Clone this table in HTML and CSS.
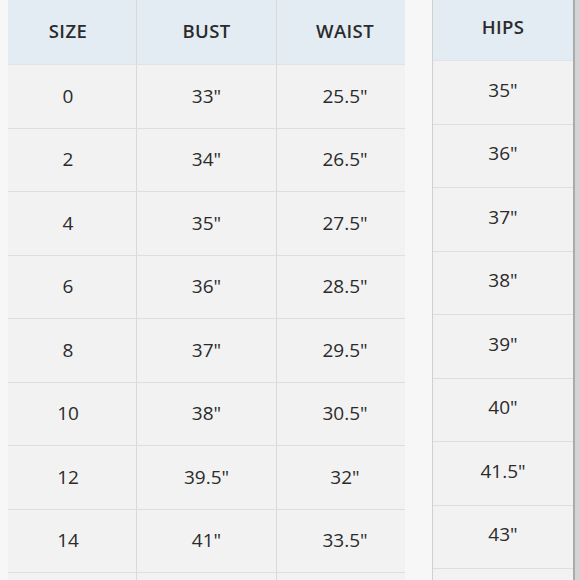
FILE: index.html
```html
<!DOCTYPE html>
<html>
<head>
<meta charset="utf-8">
<link rel="stylesheet" href="styles.css">
</head>
<body>
<div class="page">
  <div class="chart">
    <div class="row head">
      <div class="cell">SIZE</div>
      <div class="cell">BUST</div>
      <div class="cell">WAIST</div>
    </div>
    <div class="row"><div class="cell">0</div><div class="cell">33"</div><div class="cell">25.5"</div></div>
    <div class="row"><div class="cell">2</div><div class="cell">34"</div><div class="cell">26.5"</div></div>
    <div class="row"><div class="cell">4</div><div class="cell">35"</div><div class="cell">27.5"</div></div>
    <div class="row"><div class="cell">6</div><div class="cell">36"</div><div class="cell">28.5"</div></div>
    <div class="row"><div class="cell">8</div><div class="cell">37"</div><div class="cell">29.5"</div></div>
    <div class="row"><div class="cell">10</div><div class="cell">38"</div><div class="cell">30.5"</div></div>
    <div class="row"><div class="cell">12</div><div class="cell">39.5"</div><div class="cell">32"</div></div>
    <div class="row"><div class="cell">14</div><div class="cell">41"</div><div class="cell">33.5"</div></div>
    <div class="row"><div class="cell"></div><div class="cell"></div><div class="cell"></div></div>
  </div>
  <div class="hips">
    <div class="hrow hhead">HIPS</div>
    <div class="hrow">35"</div>
    <div class="hrow">36"</div>
    <div class="hrow">37"</div>
    <div class="hrow">38"</div>
    <div class="hrow">39"</div>
    <div class="hrow">40"</div>
    <div class="hrow">41.5"</div>
    <div class="hrow">43"</div>
    <div class="hrow"></div>
  </div>
  <div class="edge"></div>
</div>
</body>
</html>
```
FILE: styles.css
```css
html, body {
  margin: 0;
  padding: 0;
  background: #f7f7f7;
  overflow: hidden;
}
.page {
  display: flex;
  width: 580px;
  height: 580px;
  overflow: hidden;
  font-family: "Open Sans", "Noto Sans", sans-serif;
  color: #2b2b2b;
}
.chart {
  margin-left: 8px;
  width: 397px;
  flex: none;
  background: #f2f2f2;
}
.row {
  display: grid;
  grid-template-columns: 129px 140px 128px;
  height: 63.5px;
  border-bottom: 1.5px solid #dedede;
  box-sizing: border-box;
}
.row.head {
  height: 65px;
  background: #e3ebf3;
  border-bottom: 1.5px solid #dde3e8;
}
.cell {
  display: flex;
  align-items: center;
  justify-content: center;
  font-size: 19px;
  padding-bottom: 1px;
}
.cell:nth-child(1) {
  border-right: 1px solid #d9d9d9;
  padding-right: 8px;
}
.cell:nth-child(2) {
  border-right: 1px solid #d9d9d9;
}
.cell:nth-child(3) {
  padding-left: 8px;
}
.head .cell {
  font-weight: 600;
  font-size: 18.5px;
  letter-spacing: 0.4px;
  padding-bottom: 3px;
}
.hips {
  margin-left: 27px;
  width: 141px;
  flex: none;
  background: #f2f2f2;
  border-left: 1.5px solid #d0d0d0;
  box-sizing: border-box;
}
.hrow {
  height: 63.5px;
  display: flex;
  align-items: center;
  justify-content: center;
  font-size: 19px;
  border-bottom: 1.5px solid #dedede;
  box-sizing: border-box;
  padding-bottom: 5px;
}
.hrow.hhead {
  height: 61px;
  background: #e3ebf3;
  font-weight: 600;
  font-size: 18.5px;
  letter-spacing: 0.4px;
  padding-bottom: 7px;
  border-bottom: 1.5px solid #dde3e8;
}
.edge {
  flex: 1;
  border-left: 2px solid #ababab;
  background: #d4d4d4;
}
```
